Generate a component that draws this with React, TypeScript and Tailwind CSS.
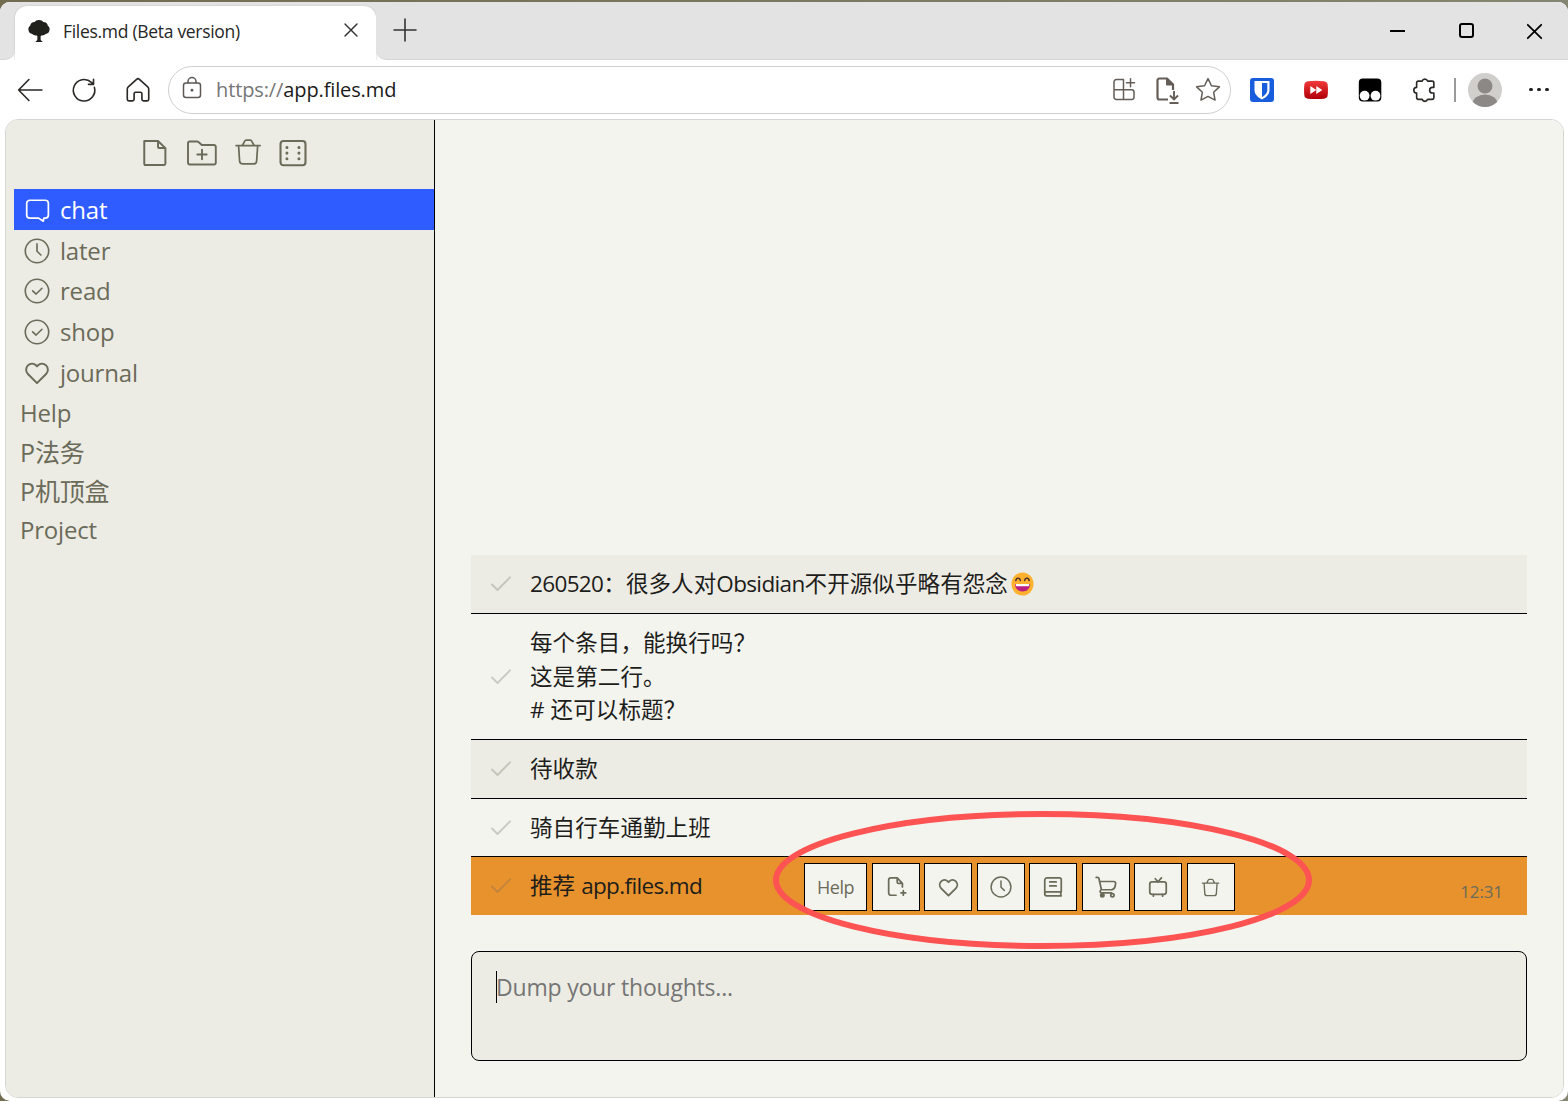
import React from 'react'
import clsx from 'clsx'

interface IconProps {
  size?: number
  className?: string
  strokeWidth?: number
}

interface SvgProps extends IconProps {
  children: React.ReactNode
}

// All icons share a 24x24 grid
const Svg = ({ size = 24, className, strokeWidth = 1.5, children }: SvgProps) => (
  <svg
    width={size}
    height={size}
    viewBox="0 0 24 24"
    fill="none"
    stroke="currentColor"
    strokeWidth={strokeWidth}
    strokeLinecap="round"
    strokeLinejoin="round"
    className={clsx('shrink-0', className)}
  >
    {children}
  </svg>
)

/* ---------- browser icons ---------- */

const TreeIcon = () => (
  <svg width="24" height="24" viewBox="0 0 24 24" className="shrink-0 fill-[#20201d]">
    <path d="M12 1c-2.300 0-3.500.8-4.300 2C5.200 3 3.300 4.600 3.200 6.700 1.800 7.600 1.200 9 1.400 10.600c.1 2.600 1.800 4.300 4 4.500 1.400 1.300 2.700 1.700 4.500 1.300l.5 1-.1 3.700-2 1.900h7.400l-2-1.900-.1-3.700.5-1c1.800.4 3.100 0 4.500-1.300 2.200-.2 3.900-1.900 4-4.500.2-1.600-.4-3-1.800-3.900C20.700 4.600 18.800 3 16.300 3 15.500 1.800 14.300 1 12 1z" />
  </svg>
)

const BackIcon = () => (
  <Svg size={26} strokeWidth={1.5}>
    <path d="M23 12H1.500M11 2.300 1.500 12 11 21.700" />
  </Svg>
)

const ReloadIcon = () => (
  <Svg size={26} strokeWidth={1.5}>
    <path d="M21.600 9.600A9.900 9.900 0 1 1 18.800 5L20.500 6.500M20.800 2.200v4.600h-4.700" />
  </Svg>
)

const HomeIcon = () => (
  <Svg size={26} strokeWidth={1.5}>
    <path d="M10.700 2.200a1.900 1.900 0 0 1 2.600 0l7.700 7c.6.500.9 1.200.9 2v9.300c0 .8-.7 1.500-1.500 1.500h-3.300c-.8 0-1.500-.7-1.500-1.500v-5c0-.8-.6-1.400-1.400-1.400h-4.400c-.8 0-1.400.6-1.400 1.400v5c0 .8-.7 1.500-1.500 1.500H3.600c-.8 0-1.500-.7-1.500-1.500v-9.300c0-.8.300-1.500.9-2z" />
  </Svg>
)

const LockIcon = () => (
  <Svg size={24} strokeWidth={1.5} className="mb-[3px] text-[#5f5955]">
    <rect x="3.500" y="7" width="17" height="14.500" rx="2.500" />
    <path d="M8 7V5.500a4 4 0 0 1 8 0V7" />
    <circle cx="12" cy="14.200" r=".7" fill="currentColor" />
  </Svg>
)

const AppsIcon = () => (
  <Svg size={24} strokeWidth={1.5} className="mb-px">
    <path d="M11.500 2.500H4.300A2.300 2.300 0 0 0 2 4.800v15.400a2.300 2.300 0 0 0 2.300 2.300h15.400a2.300 2.300 0 0 0 2.300-2.300v-5.100a2.300 2.300 0 0 0-2.300-2.300H2M11.500 2.500v20" />
    <path d="M18.500 1.800v8M14.500 5.800h8" />
  </Svg>
)

const SavePageIcon = () => (
  <svg width="26" height="28" viewBox="0 0 26 28" fill="none" stroke="currentColor" className="shrink-0">
    <path d="M14 23.500H5.500a2 2 0 0 1-2-2v-17a2 2 0 0 1 2-2h7.500l6 6V14" strokeWidth="2.200" />
    <path d="M12.500 2v7h7z" fill="currentColor" />
    <path d="M20 15v8M16 19.500l4 4 4-4M15.500 27h9" strokeWidth="1.900" />
  </svg>
)

const StarIcon = () => (
  <Svg size={26} strokeWidth={1.4}>
    <path d="M12 1.500l3.200 6.600 7.300 1-5.300 5 1.300 7.200L12 17.900l-6.500 3.400 1.300-7.200-5.300-5 7.300-1z" />
  </Svg>
)

const ShieldIcon = () => (
  <svg width="24" height="24" viewBox="0 0 24 24">
    <rect width="24" height="24" rx="3" fill="#175ddc" />
    <path d="M4.500 3h15v9c0 5-4.500 8-7.500 9.500C9 20 4.500 17 4.500 12z" fill="#fff" />
    <path d="M12 5h5.300v7c0 3.300-2.700 5.700-5.300 7.100z" fill="#175ddc" />
  </svg>
)

const ForwardIcon = () => (
  <svg width="24" height="20" viewBox="0 0 24 20">
    <defs>
      <linearGradient id="red" x1="0" y1="0" x2="0" y2="1">
        <stop offset="0" stopColor="#f23a3a" />
        <stop offset="1" stopColor="#b00008" />
      </linearGradient>
    </defs>
    <path d="M4 1.300Q12 .3 20 1.300q3.500.4 3.700 3.700.5 5 0 10-.2 3.300-3.700 3.700-8 .8-16 0Q.5 18.300.3 15q-.5-5 0-10Q.5 1.700 4 1.300z" fill="url(#red)" />
    <path d="M6.300 6v8l6-4zM12.300 6v8l6-4z" fill="#fff" />
  </svg>
)

const MonkeyIcon = () => (
  <svg width="24" height="24" viewBox="0 0 24 24">
    <rect x=".8" y=".5" width="22.500" height="23" rx="4" fill="#000" />
    <circle cx="6.600" cy="17.700" r="4.900" fill="#fff" />
    <circle cx="17.500" cy="17.700" r="4.900" fill="#fff" />
  </svg>
)

// tabs on the top and bottom, notches on the right, knob on the left
const PuzzleIcon = () => (
  <Svg size={26} strokeWidth={1.5}>
    <path d="M10.300 3.800a2.600 2.600 0 0 1 5 0h4.200c.9 0 1.600.7 1.600 1.600v4.200h-1.300a2.600 2.600 0 0 0 0 5.200h1.300V19c0 .9-.7 1.600-1.600 1.600h-4.200a2.600 2.600 0 0 1-5 0H6.800c-.9 0-1.600-.7-1.600-1.600v-4.200a2.600 2.600 0 0 1 0-5.200V5.400c0-.9.700-1.600 1.600-1.600z" />
  </Svg>
)

const Avatar = () => (
  <svg width="34" height="34" viewBox="0 0 34 34" className="ml-3 shrink-0">
    <defs>
      <clipPath id="avatar">
        <circle cx="17" cy="17" r="17" />
      </clipPath>
    </defs>
    <g clipPath="url(#avatar)">
      <rect width="34" height="34" fill="#d1cfcc" />
      <circle cx="17" cy="13" r="7.500" fill="#8c8886" />
      <ellipse cx="17" cy="31" rx="12.500" ry="9.500" fill="#8c8886" />
    </g>
  </svg>
)

/* ---------- app icons ---------- */

const FileIcon = () => (
  <Svg size={28} strokeWidth={1.7}>
    <path d="M2.800 1.700h11.800l6.300 6.100v13.500c0 .6-.4 1-1 1H3.800c-.6 0-1-.4-1-1zM14.600 1.700v5.100c0 .6.400 1 1 1h5.300" />
  </Svg>
)

const FolderPlusIcon = () => (
  <svg width="32" height="28" viewBox="0 0 32 28" fill="none" stroke="currentColor" strokeWidth="1.900" strokeLinecap="round" strokeLinejoin="round">
    <path d="M2 4.200c0-1 .7-1.700 1.700-1.700h7.500c.5 0 1 .2 1.300.5L15.800 6h12c1.200 0 2 .8 2 2v15.500c0 1.200-.8 2-2 2H4c-1.200 0-2-.8-2-2z" />
    <path d="M16 10.800v9.400M11.300 15.500h9.400" />
  </svg>
)

const TrashIcon = ({ size = 28, strokeWidth = 1.5, className }: IconProps) => (
  <Svg size={size} strokeWidth={strokeWidth} className={className}>
    <path d="M1.800 6.500h20.600M6.500 6.500c1.800-.2 2.200-4.700 3.700-4.700h4c1.500 0 1.900 4.500 3.700 4.700M4 7.800l.8 11.900c.1 1.600 1.200 2.500 2.700 2.500h9.200c1.500 0 2.600-.9 2.700-2.500l.8-11.900" />
  </Svg>
)

const DiceIcon = () => (
  <Svg size={28} strokeWidth={1.8}>
    <rect x="1.300" y="1.700" width="21.400" height="20.800" rx="2.500" />
    <g fill="currentColor" strokeWidth="1">
      <circle cx="6.800" cy="7.200" r=".8" />
      <circle cx="6.800" cy="12.100" r=".8" />
      <circle cx="6.800" cy="17" r=".8" />
      <circle cx="17.100" cy="7.200" r=".8" />
      <circle cx="17.100" cy="12.100" r=".8" />
      <circle cx="17.100" cy="17" r=".8" />
    </g>
  </Svg>
)

const ChatIcon = () => (
  <Svg size={26} strokeWidth={1.6}>
    <path d="M5.500 3h14a3 3 0 0 1 3 3v10.500a3 3 0 0 1-3 3h-1.200l-.5 2.800-4.300-2.800h-8a3 3 0 0 1-3-3V6a3 3 0 0 1 3-3z" />
  </Svg>
)

const ClockIcon = ({ size = 26, strokeWidth = 1.5 }: IconProps) => (
  <Svg size={size} strokeWidth={strokeWidth}>
    <circle cx="12" cy="12" r="10.800" />
    <path d="M12 5.300v6.900l3.600 3.500" />
  </Svg>
)

const CheckCircleIcon = () => (
  <Svg size={26} strokeWidth={1.5}>
    <circle cx="12" cy="12" r="10.800" />
    <path d="M8 11.800l3.200 3L16.600 9.500" />
  </Svg>
)

const HeartIcon = ({ size = 26, strokeWidth = 1.8 }: IconProps) => (
  <Svg size={size} strokeWidth={strokeWidth}>
    <path d="M12 21.300 3.600 12.900a5.600 5.600 0 0 1 0-7.900c2.200-2.100 5.400-2.200 7.500-.1l.9 1 .9-1c2.100-2.100 5.300-2 7.500.1a5.600 5.600 0 0 1 0 7.900z" />
  </Svg>
)

const FilePlusIcon = () => (
  <Svg size={22} strokeWidth={1.9}>
    <path d="M12 21H6.500A2.500 2.500 0 0 1 4 18.500V4.500A2.500 2.500 0 0 1 6.500 2h6.800l5.700 6v4M13.300 2v4.500A1.500 1.500 0 0 0 14.800 8H19M20 16v5M17.500 18.500h5" />
  </Svg>
)

const BookIcon = () => (
  <Svg size={22} strokeWidth={1.9}>
    <path d="M21 17.200V3.800A1.800 1.800 0 0 0 19.200 2H5.500A2.500 2.500 0 0 0 3 4.500v15M21 17.200H5.200a2.200 2.200 0 0 0 0 4.400H21M20.500 17.200v4.400M8.500 6.500h7M8.500 10.800h7" />
  </Svg>
)

const CartIcon = () => (
  <Svg size={22} strokeWidth={1.9}>
    <path d="M1.300 1.500h1.400c1 0 1.500.6 1.700 1.500L7 15h12M4.800 6h15.700c1.300 0 2.200.9 2 2.200l-.5 2.700c-.4 2.300-1.800 3.700-4 4.100M6.800 15c-1.500.6-1.800 3.300.3 3.300h11" />
    <circle cx="8" cy="21" r="1.800" fill="currentColor" />
    <circle cx="19" cy="21" r="1.800" />
  </Svg>
)

const TvIcon = () => (
  <Svg size={22} strokeWidth={1.9}>
    <rect x="3" y="6.500" width="18" height="13.500" rx="2.500" />
    <path d="M12 6.300 9 3M12 6.300 15.800 2M7 20v2M17 20v2" />
  </Svg>
)

const CheckIcon = () => (
  <svg width="22" height="18" viewBox="0 0 22 18" fill="none" stroke="currentColor" strokeWidth="1.900" strokeLinecap="round" strokeLinejoin="round">
    <path d="M2 9.500l5.500 5.500L20 2.300" />
  </svg>
)

const GrinEmoji = () => (
  <svg width="23" height="24" viewBox="0 0 23 24" role="img" aria-label="😄" className="ml-[3px] shrink-0">
    <ellipse cx="11.500" cy="12" rx="11" ry="11.500" fill="#ffb02e" />
    <path d="M4.800 8.500c.6-3.200 4-3.200 4.500 0M13.700 8.500c.5-3.200 3.900-3.200 4.500 0" fill="none" stroke="#43292b" strokeWidth="1.400" strokeLinecap="round" />
    <path d="M4 12h15c0 4.800-3.300 7.500-7.500 7.500S4 16.800 4 12z" fill="#bb1d80" />
    <path d="M4.800 12h13.400v1.200c0 .7-.5 1.100-1.200 1.100H6c-.7 0-1.200-.4-1.200-1.100z" fill="#fff" />
  </svg>
)

/* ---------- layout ---------- */

const TabStrip = () => (
  <div className="flex h-[58px] rounded-t-[10px] bg-white overflow-hidden">
    <div className="w-[15px] rounded-br-[10px] border-b border-[#d6d6d6] bg-[#e3e3e3]" />
    <div className="w-[361px] bg-[#e3e3e3] pt-1">
      <div className="flex h-full items-center rounded-t-[12px] bg-white pr-4 pl-3 shadow-[0_0_2px_#bbb]">
        <div className="pb-1">
          <TreeIcon />
        </div>
        <span className="ml-3 flex-1 pb-[3px] text-[17.500px] whitespace-nowrap tracking-[-0.300px] text-[#262626]">
          Files.md (Beta version)
        </span>
        <Svg size={18} strokeWidth={1.9} className="mb-[6px] text-[#333]">
          <path d="M4 4l16 16M20 4 4 20" />
        </Svg>
      </div>
    </div>
    <div className="flex flex-1 items-center rounded-bl-[10px] border-b border-[#d6d6d6] bg-[#e3e3e3] pl-[17px]">
      <Svg size={24} strokeWidth={1.6} className="mb-px text-[#333]">
        <path d="M12 1v22M1 12h22" />
      </Svg>
      <div className="ml-auto flex items-center text-black">
        <div className="flex w-[69px] justify-center">
          <div className="h-[2px] w-[15px] bg-black" />
        </div>
        <div className="flex w-[69px] justify-center">
          <div className="h-[15px] w-[15px] rounded-[3px] border-2 border-black" />
        </div>
        <div className="flex w-[67px] justify-center pt-px">
          <Svg size={17} strokeWidth={2.5}>
            <path d="M2.500 2.500l19 19M21.500 2.500l-19 19" />
          </Svg>
        </div>
      </div>
    </div>
  </div>
)

const ToolButton = ({ children }: { children: React.ReactNode }) => (
  <div className="flex w-[54px] shrink-0 items-center justify-center">{children}</div>
)

const Toolbar = () => (
  <div className="flex h-[59px] items-center bg-white pl-[3px] text-[#2b2826]">
    <ToolButton><BackIcon /></ToolButton>
    <ToolButton><ReloadIcon /></ToolButton>
    <ToolButton><HomeIcon /></ToolButton>
    <div className="ml-[3px] flex h-12 w-[1063px] items-center rounded-full border-[1.500px] border-[#cfcfcf] pl-[11px] pr-[9px]">
      <LockIcon />
      <span className="ml-3 text-[20px] tracking-[-0.120px] text-[#1b1b1b]">
        <span className="text-[#767676]">https://</span>app.files.md
      </span>
      <div className="ml-auto flex items-center gap-[18px] text-[#655d57]">
        <AppsIcon />
        <div className="flex items-center gap-[15px]">
          <SavePageIcon />
          <StarIcon />
        </div>
      </div>
    </div>
    <div className="ml-1 flex">
      <ToolButton><ShieldIcon /></ToolButton>
      <ToolButton><ForwardIcon /></ToolButton>
      <ToolButton><MonkeyIcon /></ToolButton>
      <ToolButton><PuzzleIcon /></ToolButton>
    </div>
    <div className="ml-[3px] h-6 w-[2px] bg-[#9c9a98]" />
    <Avatar />
    <div className="ml-[27px] flex gap-[4.500px]">
      <div className="h-[3.500px] w-[3.500px] rounded-full bg-[#222]" />
      <div className="h-[3.500px] w-[3.500px] rounded-full bg-[#222]" />
      <div className="h-[3.500px] w-[3.500px] rounded-full bg-[#222]" />
    </div>
  </div>
)

const pinned = [
  { name: 'chat', icon: <ChatIcon />, active: true },
  { name: 'later', icon: <ClockIcon /> },
  { name: 'read', icon: <CheckCircleIcon /> },
  { name: 'shop', icon: <CheckCircleIcon /> },
  { name: 'journal', icon: <HeartIcon /> },
]

const files = [
  { name: 'Help' },
  { name: 'P法务', cjk: true },
  { name: 'P机顶盒', cjk: true },
  { name: 'Project' },
]

const Sidebar = () => (
  <aside className="w-[429px] shrink-0 border-r border-black bg-[#edece4] pl-2 text-[24px] tracking-[-0.200px] text-[#6b6b5a]">
    <div className="flex h-[69px] items-center justify-center gap-[17px] pb-[3px]">
      <FileIcon />
      <FolderPlusIcon />
      <TrashIcon className="mb-[2px] -ml-px" />
      <DiceIcon />
    </div>
    {pinned.map(item => (
      <div
        key={item.name}
        className={clsx(
          'flex h-[40.700px] items-center gap-[10.500px] pt-px pl-[9.500px]',
          item.active && 'bg-[#2e5cff] text-white',
        )}
      >
        {item.icon}
        <span>{item.name}</span>
      </div>
    ))}
    {files.map(file => (
      <div
        key={file.name}
        className={clsx('flex h-[39px] items-center pt-[3px] pl-[6px]', file.cjk && 'text-[25px] tracking-[-0.150px]')}
      >
        {file.name}
      </div>
    ))}
  </aside>
)

interface MessageProps {
  className?: string
  children: React.ReactNode
  actions?: React.ReactNode
}

const Message = ({ className, children, actions }: MessageProps) => (
  <div
    className={clsx(
      'flex items-center pl-[19px] text-[22.500px] leading-[33.500px] tracking-[0.100px] text-[#1d1d1b]',
      className,
    )}
  >
    <div className="w-10 shrink-0 text-[#6b6b5a]/30">
      <CheckIcon />
    </div>
    <div className="w-[274px] whitespace-nowrap">{children}</div>
    {actions}
  </div>
)

// Latin runs sit tighter than the CJK text around them
const Latin = ({ children }: { children: React.ReactNode }) => (
  <span className="tracking-[-0.650px]">{children}</span>
)

const actionIcons = [
  <FilePlusIcon />,
  <HeartIcon size={21} strokeWidth={2.1} />,
  <ClockIcon size={22} strokeWidth={1.6} />,
  <BookIcon />,
  <CartIcon />,
  <TvIcon />,
  <TrashIcon size={19} strokeWidth={1.7} />,
]

const Actions = () => (
  <>
    <div className="flex gap-[4.500px] pt-[2px] text-[#6b6b5a]">
      <div className="flex h-12 w-[63px] items-center justify-center border border-black bg-[#f4f4ef] pt-px text-[18px] tracking-[-0.450px]">
        Help
      </div>
      {actionIcons.map((icon, i) => (
        <div key={i} className="flex h-12 w-12 items-center justify-center border border-black bg-[#f4f4ef]">
          {icon}
        </div>
      ))}
    </div>
    <span className="mr-6 ml-auto pt-[11px] text-[17px] tracking-[-0.100px] text-[#6b6b5a]">12:31</span>
  </>
)

const Chat = () => (
  <main className="flex flex-1 flex-col justify-end bg-[#f4f4ef] px-9 pb-9">
    <Message className="h-[59px] border-b border-black bg-[#edece4]">
      <span className="flex items-center">
        <Latin>260520</Latin>：很多人对<Latin>Obsidian</Latin>不开源似乎略有怨念
        <GrinEmoji />
      </span>
    </Message>
    <Message className="h-[126px] border-b border-black">
      每个条目，能换行吗？
      <br />
      这是第二行。
      <br />
      # 还可以标题？
    </Message>
    <Message className="h-[59px] border-b border-black bg-[#edece4]">待收款</Message>
    <Message className="h-[58px] border-b border-black">骑自行车通勤上班</Message>
    <Message className="h-[58px] bg-[#e8922d]" actions={<Actions />}>
      推荐 <Latin>app.files.md</Latin>
    </Message>
    <div className="mt-9 flex h-[110px] rounded-lg border border-black bg-[#edece4] pt-[19px] pl-6">
      <div className="h-8 w-px bg-black" />
      <span className="-ml-px h-8 text-[23px] leading-8 tracking-[-0.200px] text-[#757575]">Dump your thoughts...</span>
    </div>
  </main>
)

export default function App() {
  return (
    <div className="relative h-[1101px] w-[1568px] overflow-hidden bg-linear-to-r from-[#716b50] to-[#858671] pt-[2px] font-['Open_Sans','Noto_Sans_CJK_SC',sans-serif]">
      <div className="flex h-[1099px] flex-col rounded-t-[10px] rounded-b-[10px] bg-white">
        <TabStrip />
        <Toolbar />
        <div className="ml-[5px] flex h-[979px] w-[1559px] overflow-hidden rounded-[13px] border border-[#d5d5d3]">
          <Sidebar />
          <Chat />
        </div>
      </div>
      {/* hand-drawn marker around the action buttons */}
      <svg width="544" height="142" className="pointer-events-none absolute top-[809px] left-[771px]">
        <ellipse cx="271.500" cy="71" rx="266.500" ry="66" fill="none" stroke="#fd5353" strokeWidth="6" />
      </svg>
    </div>
  )
}
